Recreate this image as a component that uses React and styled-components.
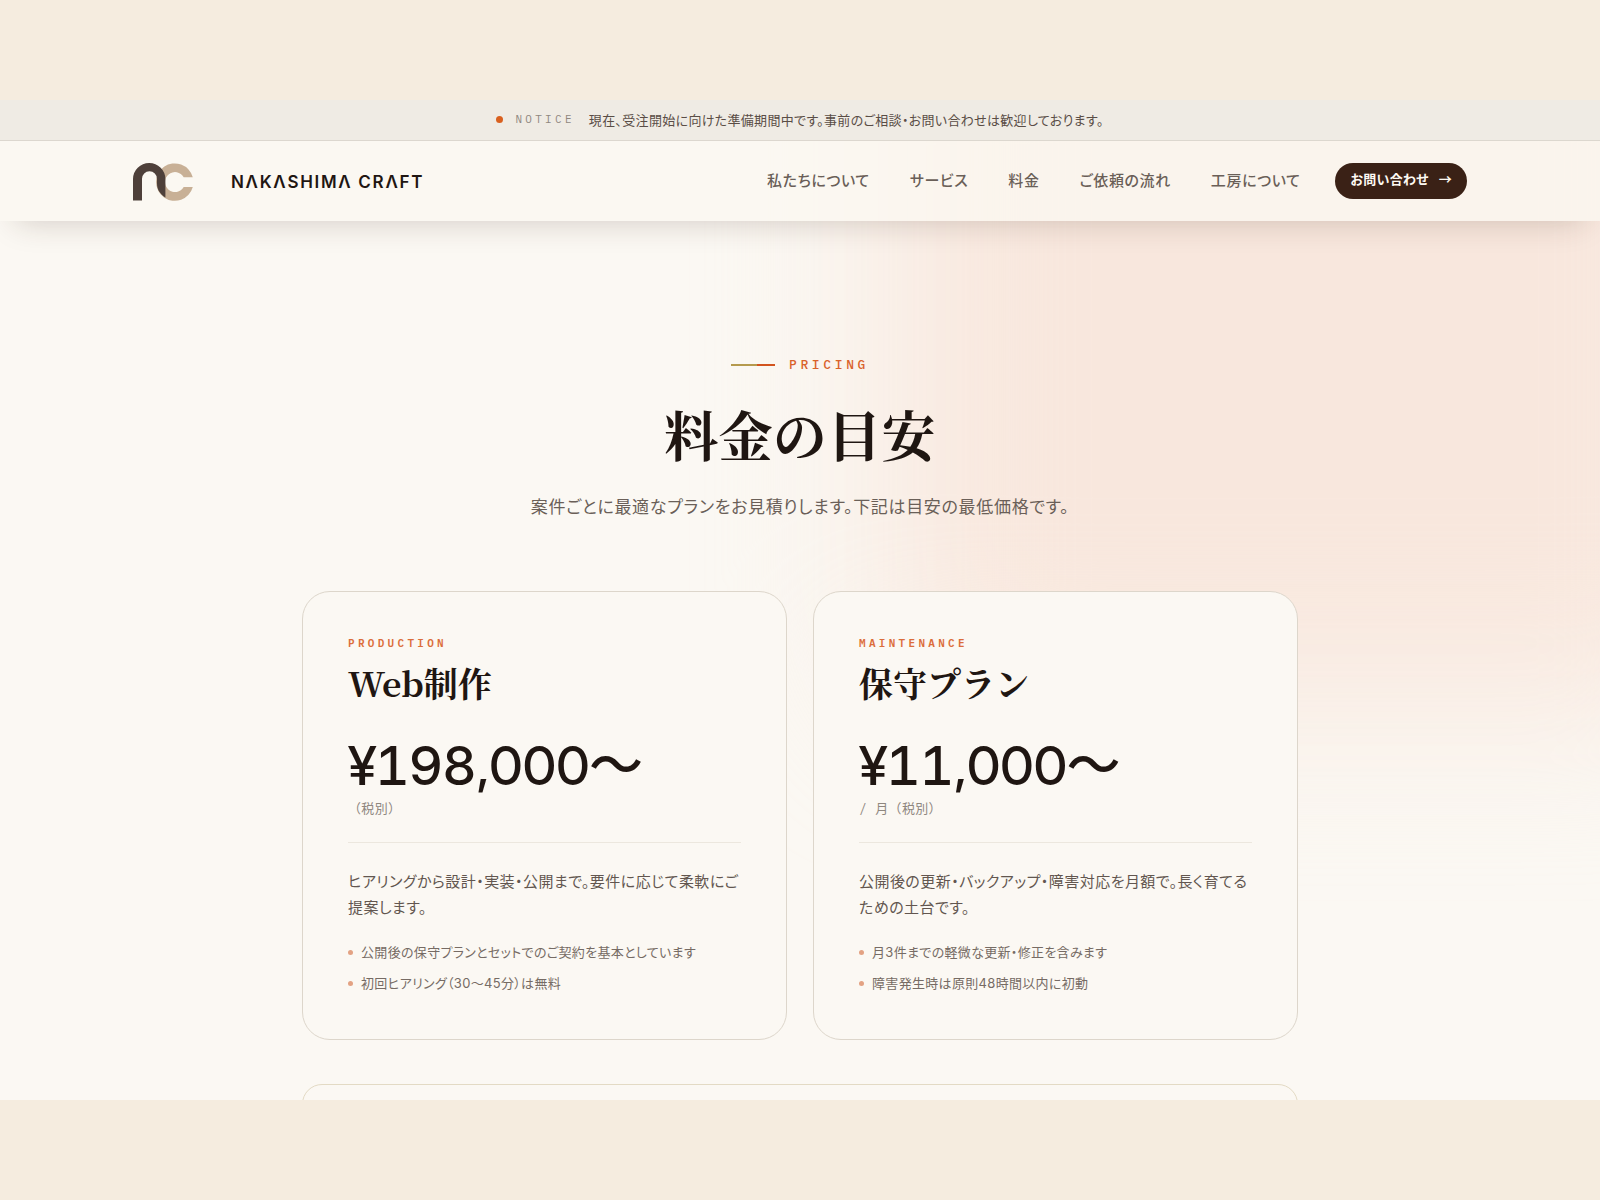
import React from 'react';
import styled, { createGlobalStyle } from 'styled-components';

const sans = `Inter, "Noto Sans CJK JP", sans-serif`;
const display = `"Inter Display", Inter, "Noto Sans CJK JP", sans-serif`;
const serif = `"Noto Serif CJK JP", "Noto Serif JP", "Liberation Serif", "Noto Sans CJK JP", serif`;
const mono = `"IBM Plex Mono", "DejaVu Sans Mono", "Noto Sans CJK JP", monospace`;

const Global = createGlobalStyle`
  *, *::before, *::after { box-sizing: border-box; }
  html { background: #f5ecdf; }
  body { margin: 0; font-family: ${sans}; font-feature-settings: "palt"; letter-spacing: 0.02em; color: #1f1612; -webkit-font-smoothing: antialiased; }
  h1, h2, p, ul { margin: 0; padding: 0; }
  a { color: inherit; text-decoration: none; }
`;

const Stage = styled.div`
  height: 100vh;
  padding: 100px 0;
  display: flex;
  background: #f5ecdf;
`;

const Page = styled.div`
  flex: 1;
  overflow: hidden;
  position: relative;
  isolation: isolate;
  background: #fbf8f3;
`;

const Glow = styled.div`
  position: absolute;
  z-index: -1;
  top: -160px;
  right: -140px;
  width: 850px;
  height: 760px;
  border-radius: 60px;
  background: #f8e7dd;
  filter: blur(84px);
`;

const Notice = styled.div`
  display: flex;
  align-items: center;
  justify-content: center;
  gap: 12px;
  height: 41px;
  padding-bottom: 2px;
  background: #efebe4;
  border-bottom: 1px solid #dcd7cf;
  font-size: 13px;
  color: #5a4d46;
`;

const Dot = styled.span`
  width: 7px;
  height: 7px;
  border-radius: 50%;
  background: #d9601f;
`;

const NoticeTag = styled.span`
  margin-right: 2px;
  font-family: ${mono};
  font-size: 11px;
  letter-spacing: 0.3em;
  color: #8f877f;
`;

const Header = styled.header`
  display: flex;
  align-items: center;
  justify-content: space-between;
  height: 80px;
  padding: 0 133px;
  background: rgba(251, 248, 242, 0.75);
  box-shadow: 0 16px 32px -16px rgba(60, 35, 24, 0.22);
`;

const Brand = styled.a`
  display: flex;
  align-items: center;
  gap: 38px;
  padding-top: 2px;
`;

const Wordmark = styled.span`
  font-size: 17px;
  line-height: 24px;
  font-weight: 600;
  letter-spacing: 0.1em;
`;

const Nav = styled.nav`
  display: flex;
  align-items: center;
  gap: 40px;
  font-size: 15px;
  line-height: 24px;
  font-weight: 500;
  letter-spacing: 0.04em;
  color: #6a5f58;
`;

const Contact = styled.button`
  display: flex;
  align-items: center;
  gap: 10px;
  height: 36px;
  margin-left: -5px;
  padding: 0 15px 4px;
  border: 0;
  border-radius: 18px;
  background: #3a2116;
  color: #fdf9f2;
  font: 700 13px/20px ${sans};
  font-feature-settings: "palt";
  letter-spacing: 0.02em;
`;

const Arrow = styled.span`
  font-family: "Noto Sans CJK JP", sans-serif;
  font-weight: 700;
`;

const Main = styled.main`
  max-width: 996px;
  margin: 0 auto;
  padding-top: 133px;
`;

const Intro = styled.section`
  display: flex;
  flex-direction: column;
  align-items: center;
  text-align: center;
`;

const Eyebrow = styled.p`
  display: flex;
  align-items: center;
  gap: 14px;
  font: 500 13px/22px ${mono};
  letter-spacing: 0.28em;
  color: #d9622b;

  &::before {
    content: "";
    width: 44px;
    height: 2px;
    background: linear-gradient(90deg, #b59a4e 60%, #d2541f 60%);
  }
`;

const Title = styled.h1`
  margin-top: 20px;
  font: 700 54px/76px ${serif};
`;

const Lead = styled.p`
  margin-top: 19px;
  font-size: 17px;
  line-height: 32px;
  letter-spacing: 0.04em;
  color: #6a5f58;
`;

const Plans = styled.div`
  display: grid;
  grid-template-columns: 1fr 1fr;
  gap: 26px;
  margin-top: 68px;
`;

const Card = styled.article`
  padding: 40px 45px 45px;
  border: 1px solid #ddd6cb;
  border-radius: 28px;
  background: #fbf8f3;
`;

const Kind = styled.p`
  font: 600 11px/22px ${mono};
  letter-spacing: 0.3em;
  color: #db6d3a;
`;

const Name = styled.h2`
  margin-top: 3px;
  font: 700 34px/52px ${serif};
  letter-spacing: 0;
`;

const Price = styled.p`
  margin-top: 25px;
  font-family: ${display};
  font-size: 54px;
  line-height: 64px;
  font-weight: 500;
  letter-spacing: -0.025em;
  font-feature-settings: "palt", "tnum";
`;

const Unit = styled.p`
  padding-bottom: 22px;
  border-bottom: 1px solid #ece7de;
  font: 400 13px/22px ${mono};
  color: #8f877f;
`;

const Body = styled.p`
  margin-top: 26px;
  font-size: 15px;
  line-height: 26px;
  letter-spacing: 0.03em;
  color: #62564f;
`;

const Points = styled.ul`
  display: grid;
  gap: 9px;
  margin-top: 20px;
  list-style: none;
  font-size: 13px;
  line-height: 22px;
  color: #766b64;
`;

const Point = styled.li`
  display: flex;
  align-items: center;
  gap: 8px;

  &::before {
    content: "";
    width: 5px;
    height: 5px;
    border-radius: 50%;
    background: #e3a283;
  }
`;

const Extra = styled.section`
  height: 120px;
  margin-top: 44px;
  border: 1px solid #e3dac4;
  border-radius: 20px;
`;

function Mark() {
  return (
    <svg width="60" height="38" viewBox="0 0 60 38" aria-hidden="true">
      <path d="M59.800 14.200A18.700 18.700 0 1 0 59.800 24H50.700A10 10 0 1 1 50.700 14.200Z" fill="#c8b096" />
      <path d="M0 37.600V16A16.200 16 0 0 1 32.400 16V34.500C27 31 24 26.500 24 20.500V15.800A7.500 7.500 0 0 0 9 15.800V37.600Z" fill="#4e403a" />
    </svg>
  );
}

const links = ['私たちについて', 'サービス', '料金', 'ご依頼の流れ', '工房について'];

const plans = [
  {
    kind: 'PRODUCTION', name: 'Web制作', price: '¥198,000〜', unit: '（税別）',
    body: 'ヒアリングから設計・実装・公開まで。要件に応じて柔軟にご提案します。',
    points: ['公開後の保守プランとセットでのご契約を基本としています', '初回ヒアリング（30〜45分）は無料'],
  },
  {
    kind: 'MAINTENANCE', name: '保守プラン', price: '¥11,000〜', unit: '/ 月（税別）',
    body: '公開後の更新・バックアップ・障害対応を月額で。長く育てるための土台です。',
    points: ['月3件までの軽微な更新・修正を含みます', '障害発生時は原則48時間以内に初動'],
  },
];

export default function App() {
  return (
    <Stage>
      <Global />
      <Page>
        <Glow />
        <Notice>
          <Dot />
          <NoticeTag>NOTICE</NoticeTag>
          <span>現在、受注開始に向けた準備期間中です。事前のご相談・お問い合わせは歓迎しております。</span>
        </Notice>
        <Header>
          <Brand href="#"><Mark /><Wordmark>NΛKΛSHIMΛ CRΛFT</Wordmark></Brand>
          <Nav>
            {links.map((l) => <a key={l} href="#">{l}</a>)}
            <Contact>お問い合わせ<Arrow>→</Arrow></Contact>
          </Nav>
        </Header>
        <Main>
          <Intro>
            <Eyebrow>PRICING</Eyebrow>
            <Title>料金の目安</Title>
            <Lead>案件ごとに最適なプランをお見積りします。下記は目安の最低価格です。</Lead>
          </Intro>
          <Plans>
            {plans.map((p) => (
              <Card key={p.kind}>
                <Kind>{p.kind}</Kind>
                <Name>{p.name}</Name>
                <Price>{p.price}</Price>
                <Unit>{p.unit}</Unit>
                <Body>{p.body}</Body>
                <Points>{p.points.map((t) => <Point key={t}>{t}</Point>)}</Points>
              </Card>
            ))}
          </Plans>
          <Extra />
        </Main>
      </Page>
    </Stage>
  );
}
